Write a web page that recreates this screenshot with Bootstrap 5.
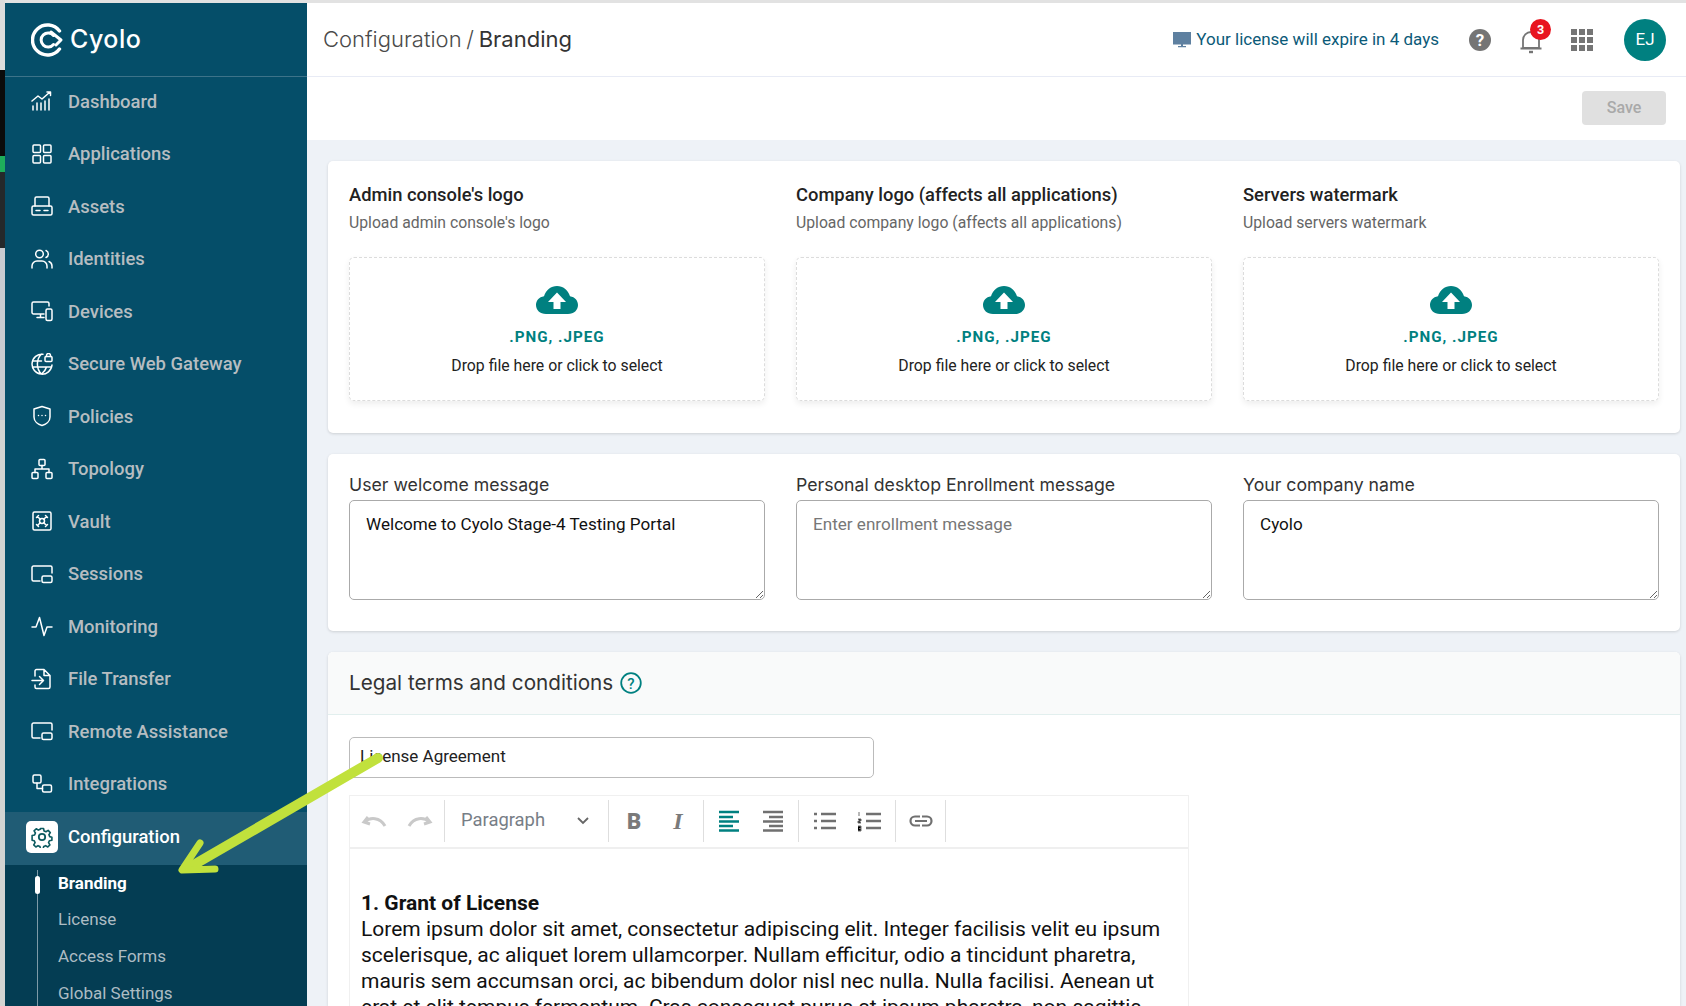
<!DOCTYPE html>
<html lang="en">
<head>
    <meta charset="UTF-8">
    <title>Configuration / Branding - Cyolo</title>
    <link href="https://cdn.jsdelivr.net/npm/bootstrap@5.3.3/dist/css/bootstrap.min.css" rel="stylesheet">
    <style>
        html, body { height: 1006px; overflow: hidden; }
        body { font-family: Roboto, "Liberation Sans", sans-serif; background: #eef2f7; color: #222; }
        .head-font { font-family: Inter, "Open Sans", sans-serif; }

        /* sliver of the window behind, left edge of the screenshot */
        .back-strip { width: 5px; flex: none; background: #d3d4d2; }
        .back-strip div:nth-child(1) { height: 70px; background: #dcdcdc; }
        .back-strip div:nth-child(2) { height: 86px; background: #0b0b0b; }
        .back-strip div:nth-child(3) { height: 16px; background: #1eae5b; }
        .back-strip div:nth-child(4) { height: 76px; background: #25292b; }
        .back-strip div:nth-child(5) { height: 172px; background: #c9ccd1; }

        .page-wrap { border-top: 3px solid #e2e2e2; min-width: 0; height: 1006px; overflow: hidden; }
        .side-bar { width: 302px; flex: none; background: #054e69; }
        .side-logo { height: 74px; flex: none; border-bottom: 1px solid #3d7389; padding-left: 26px; gap: 5px; color: #fff; }
        .side-logo span { font-size: 25px; letter-spacing: .5px; font-weight: 500; }
        .side-item { height: 52.5px; flex: none; padding: 0 0 1px 26px; gap: 15px; color: #b6bdc1; font-size: 18.45px; font-weight: 500; }
        .side-item svg { width: 22px; height: 22px; flex: none; fill: none; stroke: #fff; stroke-width: 1.5; stroke-linecap: round; stroke-linejoin: round; margin-bottom: 3px; }
        .side-item.is-on { background: #205c75; color: #fff; padding-left: 21px; gap: 10px; }
        .gear-box { width: 32px; height: 32px; background: #fff; border-radius: 5px; margin-bottom: 1px; }
        .gear-box svg { stroke: #0d5b60; stroke-width: 1.8; margin-bottom: 0; }
        .side-sub { background: #043d53; flex: 1 1 0; min-height: 0; overflow: hidden; padding: 5px 0 0 32px; }
        .sub-list { border-left: 1px solid #7d9aa7; padding: 1px 0 0 20px; height: 100%; }
        .sub-list div { height: 36.9px; color: #adbcc3; font-size: 17px; position: relative; }
        .sub-list .is-on { color: #fff; font-weight: 700; }
        .sub-list .is-on::before { content: ""; position: absolute; left: -23px; top: 5px; width: 5px; height: 18px; background: #fff; border-radius: 3px; }

        .top-bar { height: 74px; background: #fff; border-bottom: 1px solid #e8ebf5; padding: 0 20px 0 16px; }
        .crumb { font-size: 22px; color: #4a4a4a; font-weight: 300; word-spacing: -1.5px; }
        .crumb b { font-weight: 400; color: #333; }
        .expire-msg { color: #0b5a78; font-size: 17px; gap: 5px; margin-right: 30px; }
        .bell-wrap { position: relative; width: 24px; height: 26px; margin: 2px 28px 0 28px; }
        .bell-count { position: absolute; top: -9px; right: -8px; width: 21px; height: 21px; border-radius: 50%; background: #e8141f; color: #fff; font-size: 12.5px; font-weight: 700; text-align: center; line-height: 21px; }
        .dot-grid { display: grid; grid-template-columns: repeat(3, 6px); gap: 2px; margin-right: 31px; }
        .dot-grid i { height: 6px; background: #757575; display: block; }
        .user-dot { width: 42px; height: 42px; border-radius: 50%; background: #008080; color: #fff; font-size: 17px; }

        .save-bar { height: 63px; background: #fff; padding: 14px 20px 0 0; }
        .btn.save-btn:disabled { width: 84px; height: 34px; background: #e0e0e0; color: #a9a9a9; font-size: 16px; font-weight: 500; border: 0; border-radius: 4px; padding: 0; opacity: 1; }

        .main-pane { padding: 21px 6px 0 21px; }
        .white-panel { background: #fff; border-radius: 5px; box-shadow: 0 1px 3px rgba(0,0,0,.14); padding: 21px; margin-bottom: 21px; }
        .panel-upload { padding-bottom: 32px; }
        .panel-fields { padding-bottom: 31px; }
        .col-trio { display: grid; grid-template-columns: repeat(3, 416px); column-gap: 31px; }
        .up-title { font-size: 18.35px; font-weight: 500; line-height: 26px; margin-bottom: 2px; color: #222; }
        .up-sub { font-size: 15.75px; color: #666; line-height: 26px; margin-bottom: 21px; }
        .drop-box { height: 144px; border: 1px dashed #dcdcdc; border-radius: 5px; box-shadow: 0 3px 6px rgba(0,0,0,.07); padding-top: 28px; }
        .drop-box svg { width: 42px; height: 28px; display: block; }
        .drop-ext { color: #008080; font-weight: 700; font-size: 15.2px; letter-spacing: 1px; line-height: 20px; margin-top: 13px; }
        .drop-hint { font-size: 15.8px; line-height: 20px; margin-top: 9px; }
        .field-name { font-size: 17.7px; line-height: 22px; color: #333; margin-bottom: 4px; margin-top: -1px; }
        .msg-area.form-control { height: 100px; border: 1px solid #aaa; border-radius: 5px; font-size: 17.1px; line-height: 24px; padding: 11px 16px; color: #111; box-shadow: none; }
        .msg-area::placeholder { color: #777; }

        .legal-panel { padding: 0; margin: 0; height: 354px; overflow: hidden; border-radius: 5px 5px 0 0; }
        .legal-head { height: 63px; background: #f9fafa; border-bottom: 1px solid #e2efee; padding-left: 21px; gap: 7px; font-size: 20.7px; color: #333; border-radius: 5px 5px 0 0; }
        .legal-name.form-control { width: 525px; height: 41px; border: 1px solid #bbb; border-radius: 5px; font-size: 17px; padding: 0 10px 4px; margin: 22px 0 17px 21px; color: #222; box-shadow: none; }
        .edit-box { width: 840px; margin-left: 21px; border: 1px solid #f0f0f0; border-bottom: 0; }
        .edit-tools { height: 53px; border-bottom: 2px solid #efefef; padding: 4px 0 5px; }
        .tool-group { height: 42px; border-right: 1px solid #dedede; flex: none; }
        .tool-group svg { width: 44px; height: 24px; flex: none; display: block; }
        .tools-history { width: 95px; padding-left: 3px; }
        .para-pick { width: 164px; padding: 0 18px 2px 16px; color: #777e86; font-size: 18.4px; }
        .para-pick svg { width: 14px; }
        .tools-text { width: 95px; padding-left: 3px; }
        .tools-align { width: 95px; padding-left: 3px; }
        .tools-list { width: 97px; padding-left: 4px; }
        .tools-link { width: 50px; padding-left: 3px; }
        .edit-text { padding: 41px 11px 0 11px; font-size: 21px; line-height: 26px; color: #111; white-space: nowrap; }
        .edit-text strong { font-weight: 700; }

        .arrow-over { position: absolute; left: 0; top: 0; width: 1686px; height: 1006px; pointer-events: none; }
    </style>
</head>
<body class="d-flex position-relative">

<div class="back-strip"><div></div><div></div><div></div><div></div><div></div></div>

<div class="page-wrap d-flex flex-grow-1">

    <!-- Sidebar -->
    <div class="side-bar d-flex flex-column">
        <div class="side-logo d-flex align-items-center">
            <svg width="34" height="34" viewBox="0 0 34 34" fill="none" stroke="#fff" stroke-linecap="round">
                <path d="M28.5 8 A15 15 0 1 0 28.5 26" stroke-width="3.4"/>
                <path d="M22.5 12.5 A7 7 0 1 0 22.5 21.5" stroke-width="3"/>
                <path d="M20 9 L30 17 L25 22" stroke-width="3" stroke-linejoin="round"/>
            </svg>
            <span class="head-font">Cyolo</span>
        </div>
        <div class="side-item d-flex align-items-center"><svg viewBox="0 0 22 22"><path d="M1 11 7 6l4 3 8-7M16 2h3.500v3.500M2 20v-4M6 20v-7M10 20v-7M14 20v-9M18 20V9"/></svg>Dashboard</div>
        <div class="side-item d-flex align-items-center"><svg viewBox="0 0 22 22"><rect x="2" y="2" width="7.500" height="7.500" rx="1"/><rect x="12.500" y="2" width="7.500" height="7.500" rx="1"/><rect x="2" y="12.500" width="7.500" height="7.500" rx="1"/><rect x="12.500" y="12.500" width="7.500" height="7.500" rx="1"/></svg>Applications</div>
        <div class="side-item d-flex align-items-center"><svg viewBox="0 0 22 22"><path d="M4 11V3.500a1.500 1.500 0 0 1 1.500-1.500h11A1.500 1.500 0 0 1 18 3.500V11"/><rect x="1" y="11" width="20" height="9" rx="1.500"/><path d="M5 15.500h4M13 15.500h4"/></svg>Assets</div>
        <div class="side-item d-flex align-items-center"><svg viewBox="0 0 22 22"><circle cx="8.500" cy="6" r="3.800"/><path d="M1 20v-2a5 5 0 0 1 5-5h5a5 5 0 0 1 5 5v2M15 2.500a3.800 3.800 0 0 1 0 7M18 13.500a5 5 0 0 1 3 4.500v2"/></svg>Identities</div>
        <div class="side-item d-flex align-items-center"><svg viewBox="0 0 22 22"><path d="M13 14H2.500A1.500 1.500 0 0 1 1 12.500V3.500A1.500 1.500 0 0 1 2.500 2h14A1.500 1.500 0 0 1 18 3.500V6M6 17.500h7M9.500 14v3.500"/><rect x="15" y="9" width="6" height="11.500" rx="1.500"/></svg>Devices</div>
        <div class="side-item d-flex align-items-center"><svg viewBox="0 0 22 22"><path d="M12 1.200A10 10 0 1 0 21 12M1.500 8h9M1.500 14h19M10.500 1.200C5 6 5 16 10.500 21c3-2.500 4.500-5 5-7"/><rect x="14" y="3.500" width="7" height="5" rx="1"/><path d="M15.500 3.500V2.500a2 2 0 0 1 4 0v1"/></svg>Secure Web Gateway</div>
        <div class="side-item d-flex align-items-center"><svg viewBox="0 0 22 22"><path d="M11 1.500 19 4v8c0 4.500-4 7.500-8 8.500-4-1-8-4-8-8.500V4z"/><path d="M7.500 10.500h.01M11 10.500h.01M14.500 10.500h.01"/></svg>Policies</div>
        <div class="side-item d-flex align-items-center"><svg viewBox="0 0 22 22"><rect x="8" y="1.500" width="6" height="6" rx="1"/><rect x="1" y="14.500" width="6" height="6" rx="1"/><rect x="15" y="14.500" width="6" height="6" rx="1"/><path d="M11 7.500V11M4 14.500V11h14v3.500"/></svg>Topology</div>
        <div class="side-item d-flex align-items-center"><svg viewBox="0 0 22 22"><rect x="2" y="2" width="18" height="18" rx="1.500"/><circle cx="11" cy="11" r="2.500"/><path d="m6.500 6.500 2.700 2.700M15.500 6.500l-2.700 2.700M6.500 15.500l2.700-2.700M15.500 15.500l-2.700-2.700M5.500 7.500l2-2M14.500 5.500l2 2M5.500 14.500l2 2M14.500 16.500l2-2"/></svg>Vault</div>
        <div class="side-item d-flex align-items-center"><svg viewBox="0 0 22 22"><path d="M9 18H2.500A1.500 1.500 0 0 1 1 16.500v-12A1.500 1.500 0 0 1 2.500 3h17A1.500 1.500 0 0 1 21 4.500V10"/><rect x="11" y="13" width="10" height="6.500" rx="1.500"/></svg>Sessions</div>
        <div class="side-item d-flex align-items-center"><svg viewBox="0 0 22 22"><path d="M1 12h4l3.500-9.500 4.500 18 3-8.500h5"/></svg>Monitoring</div>
        <div class="side-item d-flex align-items-center"><svg viewBox="0 0 22 22"><path d="M4 8V3a1.500 1.500 0 0 1 1.500-1.500H13l6 6V19a1.500 1.500 0 0 1-1.500 1.500h-12A1.500 1.500 0 0 1 4 19v-2M13 1.500V7.500h6M1 12.500h11M8.500 8.500l4 4-4 4"/></svg>File Transfer</div>
        <div class="side-item d-flex align-items-center"><svg viewBox="0 0 22 22"><path d="M9 18H2.500A1.500 1.500 0 0 1 1 16.500v-12A1.500 1.500 0 0 1 2.500 3h17A1.500 1.500 0 0 1 21 4.500V10"/><rect x="11" y="13" width="10" height="6.500" rx="1.500"/></svg>Remote Assistance</div>
        <div class="side-item d-flex align-items-center"><svg viewBox="0 0 22 22"><rect x="2" y="2" width="8" height="8" rx="1.500"/><rect x="11.500" y="12" width="9" height="7" rx="1.500"/><path d="M6 10v5.500h5.500"/></svg>Integrations</div>
        <div class="side-item is-on d-flex align-items-center">
            <span class="gear-box d-flex align-items-center justify-content-center"><svg viewBox="0 0 22 22"><circle cx="11" cy="11" r="3.200"/><path d="M9.300 1.500h3.400l.6 2.800 2.100.9 2.400-1.500 2.400 2.400-1.500 2.400.9 2.100 2.400.6v3.400l-2.800.6-.9 2.100 1.500 2.400-2.400 2.400-2.400-1.500-2.100.9-.6 2.800H9.300l-.6-2.800-2.100-.9-2.400 1.500-2.400-2.400 1.500-2.400-.9-2.100-2.400-.6V9.300l2.800-.6.9-2.100-1.500-2.400 2.400-2.400 2.400 1.500 2.100-.9z" transform="translate(1.100 1.100) scale(.9)"/></svg></span>
            Configuration
        </div>
        <div class="side-sub">
            <div class="sub-list">
                <div class="is-on">Branding</div>
                <div>License</div>
                <div>Access Forms</div>
                <div>Global Settings</div>
            </div>
        </div>
    </div>

    <!-- Main content -->
    <div class="flex-grow-1" style="min-width:0">
        <div class="top-bar d-flex align-items-center justify-content-between">
            <div class="crumb head-font">Configuration / <b>Branding</b></div>
            <div class="d-flex align-items-center">
                <div class="expire-msg d-flex align-items-center">
                    <svg width="18" height="18" viewBox="0 0 18 18"><path fill="#5e80a0" d="M0 1h18v12.500H0zM8 13.500h2V15h3v1.200H5V15h3z"/></svg>
                    Your license will expire in 4 days
                </div>
                <svg width="22" height="22" viewBox="0 0 22 22"><circle cx="11" cy="11" r="11" fill="#757575"/><text x="11" y="17" text-anchor="middle" font-family="Roboto, sans-serif" font-size="17" font-weight="700" fill="#fff">?</text></svg>
                <div class="bell-wrap">
                    <svg width="24" height="26" viewBox="0 0 24 26" fill="none" stroke="#757575" stroke-width="1.800" stroke-linejoin="round"><path d="M4 20V12a8 8 0 0 1 16 0v8zM1.500 20.500h21"/><path d="M10 24h4" stroke-width="2.400"/></svg>
                    <span class="bell-count">3</span>
                </div>
                <div class="dot-grid"><i></i><i></i><i></i><i></i><i></i><i></i><i></i><i></i><i></i></div>
                <div class="user-dot d-flex align-items-center justify-content-center">EJ</div>
            </div>
        </div>
        <div class="save-bar d-flex justify-content-end align-items-start">
            <button class="save-btn btn" disabled>Save</button>
        </div>

        <div class="main-pane">
            <div class="white-panel panel-upload">
                <div class="col-trio">
                    <div>
                        <div class="up-title">Admin console's logo</div>
                        <div class="up-sub">Upload admin console's logo</div>
                        <div class="drop-box d-flex flex-column align-items-center">
                            <svg viewBox="0 0 42 28"><path fill="#008080" d="M10 28C4 28 0 24 0 19c0-4.500 3-8 8-8.800C10 4 15 0 21 0s11 4 13 10.200c5 .8 8 4.300 8 8.800 0 5-4 9-10 9z"/><path fill="#fff" d="M21 6.500 30 16h-5.500v7h-7v-7H12z"/></svg>
                            <div class="drop-ext">.PNG, .JPEG</div>
                            <div class="drop-hint">Drop file here or click to select</div>
                        </div>
                    </div>
                    <div>
                        <div class="up-title">Company logo (affects all applications)</div>
                        <div class="up-sub">Upload company logo (affects all applications)</div>
                        <div class="drop-box d-flex flex-column align-items-center">
                            <svg viewBox="0 0 42 28"><path fill="#008080" d="M10 28C4 28 0 24 0 19c0-4.500 3-8 8-8.800C10 4 15 0 21 0s11 4 13 10.200c5 .8 8 4.300 8 8.800 0 5-4 9-10 9z"/><path fill="#fff" d="M21 6.500 30 16h-5.500v7h-7v-7H12z"/></svg>
                            <div class="drop-ext">.PNG, .JPEG</div>
                            <div class="drop-hint">Drop file here or click to select</div>
                        </div>
                    </div>
                    <div>
                        <div class="up-title">Servers watermark</div>
                        <div class="up-sub">Upload servers watermark</div>
                        <div class="drop-box d-flex flex-column align-items-center">
                            <svg viewBox="0 0 42 28"><path fill="#008080" d="M10 28C4 28 0 24 0 19c0-4.500 3-8 8-8.800C10 4 15 0 21 0s11 4 13 10.200c5 .8 8 4.300 8 8.800 0 5-4 9-10 9z"/><path fill="#fff" d="M21 6.500 30 16h-5.500v7h-7v-7H12z"/></svg>
                            <div class="drop-ext">.PNG, .JPEG</div>
                            <div class="drop-hint">Drop file here or click to select</div>
                        </div>
                    </div>
                </div>
            </div>

            <div class="white-panel panel-fields">
                <div class="col-trio">
                    <div>
                        <div class="field-name head-font">User welcome message</div>
                        <textarea class="msg-area form-control">Welcome to Cyolo Stage-4 Testing Portal</textarea>
                    </div>
                    <div>
                        <div class="field-name head-font">Personal desktop Enrollment message</div>
                        <textarea class="msg-area form-control" placeholder="Enter enrollment message"></textarea>
                    </div>
                    <div>
                        <div class="field-name head-font">Your company name</div>
                        <textarea class="msg-area form-control">Cyolo</textarea>
                    </div>
                </div>
            </div>

            <div class="white-panel legal-panel">
                <div class="legal-head head-font d-flex align-items-center">
                    Legal terms and conditions
                    <svg width="22" height="22" viewBox="0 0 22 22" fill="none"><circle cx="11" cy="11" r="9.800" stroke="#008080" stroke-width="1.800"/><text x="11" y="16.500" text-anchor="middle" font-family="Roboto, sans-serif" font-size="15" font-weight="500" fill="#008080">?</text></svg>
                </div>
                <input class="legal-name form-control" value="License Agreement">
                <div class="edit-box">
                    <div class="edit-tools d-flex align-items-center">
                        <div class="tool-group tools-history d-flex align-items-center">
                            <svg viewBox="0 0 44 24" fill="none" stroke="#c9c9c9" stroke-width="3"><path d="M15 8 11 13l6 2M11.500 13C17 8 27 8 32 17"/></svg>
                            <svg viewBox="0 0 44 24" fill="none" stroke="#c9c9c9" stroke-width="3"><path d="M29 8l4 5-6 2M32.500 13C27 8 17 8 12 17"/></svg>
                        </div>
                        <div class="tool-group para-pick d-flex align-items-center justify-content-between">
                            Paragraph
                            <svg viewBox="0 0 14 24" fill="none" stroke="#666" stroke-width="1.800"><path d="M2 10l5 5 5-5"/></svg>
                        </div>
                        <div class="tool-group tools-text d-flex align-items-center">
                            <svg viewBox="0 0 44 24"><text x="22" y="20" text-anchor="middle" font-family="Roboto, sans-serif" font-weight="900" font-size="22" fill="#7a7a7a">B</text></svg>
                            <svg viewBox="0 0 44 24"><text x="22" y="20" text-anchor="middle" font-family="Liberation Serif, serif" font-weight="700" font-style="italic" font-size="24" fill="#7a7a7a">I</text></svg>
                        </div>
                        <div class="tool-group tools-align d-flex align-items-center">
                            <svg viewBox="0 0 44 24" stroke="#008080" stroke-width="2.400"><path d="M12 3h20M12 8h14M12 12.500h20M12 17h14M12 21.500h20"/></svg>
                            <svg viewBox="0 0 44 24" stroke="#707070" stroke-width="2.400"><path d="M12 3h20M18 8h14M12 12.500h20M18 17h14M12 21.500h20"/></svg>
                        </div>
                        <div class="tool-group tools-list d-flex align-items-center">
                            <svg viewBox="0 0 44 24" stroke="#707070" stroke-width="2.400"><path d="M18 5h15M18 12h15M18 19h15M11 5h3M11 12h3M11 19h3"/></svg>
                            <svg viewBox="0 0 44 24" stroke="#707070" stroke-width="2.400"><path d="M19 5h15M19 12h15M19 19h15"/><path d="M12 3v4M11 10h3v2h-3v2h3M11 17h3v5h-3M12 19.500h2" stroke-width="1"/></svg>
                        </div>
                        <div class="tool-group tools-link d-flex align-items-center">
                            <svg viewBox="0 0 44 24" fill="none" stroke="#707070" stroke-width="2.200"><path d="M21 7.500h-5a4.500 4.500 0 0 0 0 9h5M23 7.500h5a4.500 4.500 0 0 1 0 9h-5M16 12h12"/></svg>
                        </div>
                    </div>
                    <div class="edit-text">
                        <strong>1. Grant of License</strong><br>
                        Lorem ipsum dolor sit amet, consectetur adipiscing elit. Integer facilisis velit eu ipsum<br>
                        scelerisque, ac aliquet lorem ullamcorper. Nullam efficitur, odio a tincidunt pharetra,<br>
                        mauris sem accumsan orci, ac bibendum dolor nisl nec nulla. Nulla facilisi. Aenean ut<br>
                        erat et elit tempus fermentum. Cras consequat purus at ipsum pharetra, non sagittis
                    </div>
                </div>
            </div>
        </div>
    </div>
</div>

<!-- Annotation arrow over the screenshot -->
<svg class="arrow-over" viewBox="0 0 1686 1006" fill="none" stroke="#c1e13c" stroke-linecap="round" stroke-linejoin="round">
    <path d="M378 758 190 867" stroke-width="10"/>
    <path d="M200 843 182 870 215 869" stroke-width="7"/>
</svg>

<script src="https://cdn.jsdelivr.net/npm/bootstrap@5.3.3/dist/js/bootstrap.bundle.min.js"></script>
</body>
</html>
